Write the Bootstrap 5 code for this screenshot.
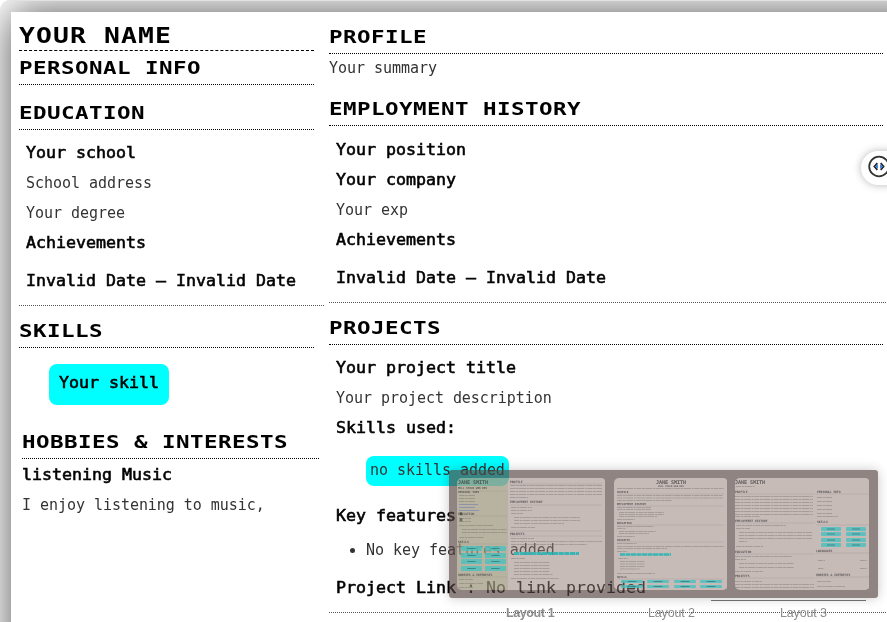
<!DOCTYPE html>
<html lang="en">
<head>
<meta charset="utf-8">
<meta name="viewport" content="width=device-width, initial-scale=1">
<title>Resume builder</title>
<link href="https://cdn.jsdelivr.net/npm/bootstrap@5.3.0/dist/css/bootstrap.min.css" rel="stylesheet">
<style>
body{height:622px;font-family:"DejaVu Sans Mono","Liberation Mono",monospace;font-size:15px;color:#000;background:#fff}
.frame{height:622px;padding:11px 0 0 11px;border-top:1px solid #e2e2e2;border-radius:10px 0 0 0}
.sheet{width:940px;height:680px;box-shadow:0 0 40px rgba(0,0,0,.68);padding-left:8px}
.side{width:310px;flex:none}
.main{width:557px;flex:none;padding-top:8px}
.side>.sec,.name{width:295px}
.main>.sec{width:554px}
.name{height:39px;padding-top:9px;line-height:30px;font-size:22px;border-bottom:1px dashed #000}
.name span{display:inline-block;transform:scaleX(1.2);transform-origin:0 0;letter-spacing:.93px}
.sec{height:34px;line-height:34px;font-size:18px;font-weight:700;border-bottom:1px dotted #000;margin:0}
.sec span{display:inline-block;transform:scaleX(1.25);transform-origin:0 0;letter-spacing:.36px;white-space:nowrap}
.line{height:30px;line-height:30px;white-space:nowrap;font-weight:400;color:#333;letter-spacing:-.04px}
.line.strong{-webkit-text-stroke:.55px #000;letter-spacing:0;color:#000;transform:scaleX(1.107);transform-origin:0 0}
.entry{padding-left:7px}
.dates{margin-top:8px}
.rule{border-bottom:1px dotted #555;height:10px}
.pill{background:#0ff;border-radius:8px;margin-left:30px}
.hobby{margin:20px 0 0 3px;width:297px}
.hobby .line{padding-left:0}
.loose{-webkit-text-stroke:.1px #000}
.picker{left:449px;top:470px;width:429px}
.strip{height:128px;background:rgba(85,68,66,.66);border-radius:3px;box-shadow:0 0 12px rgba(0,0,0,.22);padding:8px 8px 0}
.strip svg{display:block;flex:none;border-radius:5px;backdrop-filter:brightness(1.41) saturate(.8)}
.labels{font:12.5px/16px "Liberation Sans",Arial,sans-serif;color:#8c8c8c;padding-top:7px}
.labels div{white-space:nowrap}
.toggler{left:861px;top:151px;width:60px;height:34px;border-radius:17px;background:#fff;box-shadow:0 0 9px rgba(0,0,0,.28);padding:4px 0 0 6px}
.under{left:711px;top:600px;width:155px;height:1px;background:#777}
</style>
<script src="https://cdn.jsdelivr.net/npm/bootstrap@5.3.0/dist/js/bootstrap.bundle.min.js"></script>
</head>
<body class="overflow-hidden position-relative">
<div class="frame overflow-hidden">
 <div class="sheet bg-white d-flex">
  <aside class="side">
   <div class="name fw-bold"><span>YOUR NAME</span></div>
   <h2 class="sec"><span>PERSONAL INFO</span></h2>
   <h2 class="sec" style="margin-top:11px"><span>EDUCATION</span></h2>
   <div class="entry pt-2">
    <div class="line strong">Your school</div>
    <div class="line">School address</div>
    <div class="line">Your degree</div>
    <div class="line strong">Achievements</div>
    <div class="line strong dates">Invalid Date — Invalid Date</div>
   </div>
   <div class="rule" style="width:305px"></div>
   <h2 class="sec mt-2"><span>SKILLS</span></h2>
   <div class="pill mt-3" style="width:120px;height:41px;padding:4px 0 0 10px"><div class="line strong">Your skill</div></div>
   <div class="hobby">
    <h2 class="sec"><span>HOBBIES &amp; INTERESTS</span></h2>
    <div class="line strong" style="margin-top:1px">listening Music</div>
    <div class="line">I enjoy listening to music,</div>
   </div>
  </aside>
  <main class="main">
   <h2 class="sec"><span>PROFILE</span></h2>
   <div class="line" style="height:28px;line-height:29px">Your summary</div>
   <h2 class="sec" style="margin-top:10px"><span>EMPLOYMENT HISTORY</span></h2>
   <div class="entry" style="padding-top:9px">
    <div class="line strong">Your position</div>
    <div class="line strong">Your company</div>
    <div class="line">Your exp</div>
    <div class="line strong">Achievements</div>
    <div class="line strong dates">Invalid Date — Invalid Date</div>
   </div>
   <div class="rule"></div>
   <h2 class="sec mt-2"><span>PROJECTS</span></h2>
   <div class="entry pt-2">
    <div class="line strong">Your project title</div>
    <div class="line">Your project description</div>
    <div class="line strong">Skills used:</div>
    <div class="pill" style="width:143px;height:30px;margin-top:13px;padding-left:4px"><div class="line" style="line-height:28px">no skills added</div></div>
    <div class="line strong" style="margin-top:15px">Key features:</div>
    <ul class="mb-0" style="margin-top:4px;padding-left:30px"><li class="line">No key features added</li></ul>
    <div class="line strong dates">Project Link <span class="loose">: No link provided</span></div>
   </div>
   <div class="rule"></div>
  </main>
 </div>
</div>

<div class="toggler position-absolute">
 <svg width="24" height="24" viewBox="0 0 24 24" fill="none"><circle cx="12" cy="11.5" r="9.8" stroke="#333" stroke-width="1.8"/><path d="M10.300 8 7.300 11.500l3 3.500M13.700 8l3 3.500-3 3.500" stroke="#222" stroke-width="1.600"/><path d="M10.800 9v5L8.400 11.500zM13.200 9v5l2.400-2.500z" fill="#1769e0"/></svg>
</div>

<div class="under position-absolute"></div>
<div class="picker position-absolute">
 <div class="strip d-flex">
  <svg id="t1" width="149" height="112" style="margin-right:8px"></svg>
  <svg id="t2" width="114" height="112" style="margin-right:7px"></svg>
  <svg id="t3" width="135" height="112"></svg>
 </div>
 <div class="labels d-flex">
  <div class="fw-bold" style="margin-left:57px;width:142px;letter-spacing:-.4px">Layout 1</div>
  <div style="width:132px;letter-spacing:-.15px">Layout 2</div>
  <div style="letter-spacing:-.15px">Layout 3</div>
 </div>
</div>
<script>
// Miniature résumé previews. Body copy is reduced to dashed strokes.
const head=(x,y,s,t,a)=>`<text x="${x}" y="${y}" font-size="${s}" font-weight="700" fill="#333" fill-opacity=".72" text-anchor="${a||'start'}">${t}</text>`;
const copy=(x,w,ys,n=0)=>ys.map((y,i)=>`<path d="M${x} ${y+.5}h${i===ys.length-1&&n?n:w}" stroke="#555" stroke-opacity=".3" stroke-width="1" stroke-dasharray="5 .6 3 .5 7 .7 2 .5"/>`).join('');
const rule=(x,w,y)=>`<path d="M${x} ${y}h${w}" stroke="#777" stroke-opacity=".25" stroke-width=".7"/>`;
const chips=(xs,ys,w,h)=>ys.map(y=>xs.map(x=>`<rect x="${x}" y="${y}" width="${w}" height="${h}" rx="1" fill="#48c0be" fill-opacity=".8"/><path d="M${x+w*.3} ${y+h/2}h${w*.4}" stroke="#155" stroke-opacity=".5" stroke-width="1"/>`).join('')).join('');

t1.innerHTML='<path d="M0 0h51v112H0z" fill="#a5a880" fill-opacity=".42"/>'
+head(1,6,5,'JANE SMITH')+head(1,11,2.7,'FULL STACK WEB DEV')+head(1,15,2.7,'PERSONAL INFO')
+copy(2,16,[17,20,23]) +'<path d="M2 26.500h19M2 29.500h16M2 32.500h20" stroke="#5560bb" stroke-opacity=".4"/>'
+head(1,37,3,'EDUCATION')+copy(2,12,[40,43])+copy(2,34,[47])+copy(5,45,[51,54])+copy(2,25,[59])+rule(1,49,13)+rule(1,49,38)
+head(1,65,3,'SKILLS')+rule(1,49,66)+chips([4,28],[68,75,81,88],21,5)
+head(1,98,3,'HOBBIES &amp; INTERESTS')+rule(1,49,99)+copy(2,14,[101])+copy(2,24,[105])+copy(2,14,[109])
+head(53,5,3,'PROFILE')+rule(53,92,6)+copy(53,92,[7,10,13,16,19],18)+head(53,25,3,'EMPLOYMENT HISTORY')+rule(53,92,27)
+copy(54,21,[29,32,35],12)+copy(57,66,[39,42,45],50)+copy(54,24,[49])+rule(53,92,53)+head(53,57,3,'PROJECTS')+rule(53,92,58)
+copy(54,23,[60])+copy(54,91,[63,66],76)+'<path d="M57 75.500h65" stroke="#3ab5b3" stroke-width="3" stroke-dasharray="5 .6"/>'
+copy(54,14,[80])+copy(57,36,[84,87,90,93,96],39)+copy(54,48,[100]);

t2.innerHTML=head(57,5.5,5,'JANE SMITH','middle')+head(57,9,2.4,'FULL STACK WEB DEV','middle')+copy(3,107,[10])
+head(3,15,2.7,'PROFILE')+rule(3,107,16)+copy(3,106,[17,19.5,22],55)+head(3,27,2.7,'EMPLOYMENT HISTORY')+rule(3,107,28)
+copy(3,34,[29,31])+copy(5,45,[34,36,38],38)+copy(3,18,[41])+head(3,46,2.7,'EDUCATION')+rule(3,107,47)
+copy(3,37,[48,50],9)+copy(5,37,[53,55],30)+copy(3,18,[58])+head(3,63,2.7,'PROJECTS')+rule(3,107,64)
+copy(3,20,[65])+copy(3,107,[68,70],50)+copy(3,10,[73])+'<path d="M6 76.500h51" stroke="#3ab5b3" stroke-width="2.5" stroke-dasharray="5 .5"/>'
+copy(4,10,[80])+copy(6,25,[83,85.5,88,90.5],20)+copy(3,38,[95])+head(3,100,2.7,'SKILLS')+rule(3,107,101)+chips([7,33,60,86],[102,107],22,3);

t3.innerHTML=head(0,6,5,'JANE SMITH')+copy(1,19,[8])+head(0,15,3,'PROFILE')+rule(0,80,16)+copy(0,78,[18,21,24,27,30,33,36,38],25)
+head(0,44,3,'EMPLOYMENT HISTORY')+rule(0,80,45)+copy(1,50,[47,50],14)+copy(4,73,[54,57,60,63],8)+copy(1,27,[68])
+head(0,75,3,'EDUCATION')+rule(0,80,76)+copy(0,57,[78,81],11)+copy(4,55,[85,89])+copy(0,28,[93])
+head(0,99,3,'PROJECTS')+rule(0,80,100)+copy(0,27,[103])+copy(0,79,[106,109])
+head(82,15,3,'PERSONAL INFO')+rule(81,53,16)+copy(82,15,[19,23,27,31,35,38],21)+head(82,45,3,'SKILLS')+rule(81,53,47)
+chips([86,111],[49,54,60,65],20,4)+head(81,74,3,'LANGUAGES')+rule(81,53,75)+copy(83,7,[82])+copy(125,7,[82])+copy(83,6,[90])+copy(125,7,[90])
+head(81,98,3,'HOBBIES &amp; INTERESTS')+rule(81,53,99)+copy(82,14,[103])+copy(82,28,[108]);
</script>
</body>
</html>
